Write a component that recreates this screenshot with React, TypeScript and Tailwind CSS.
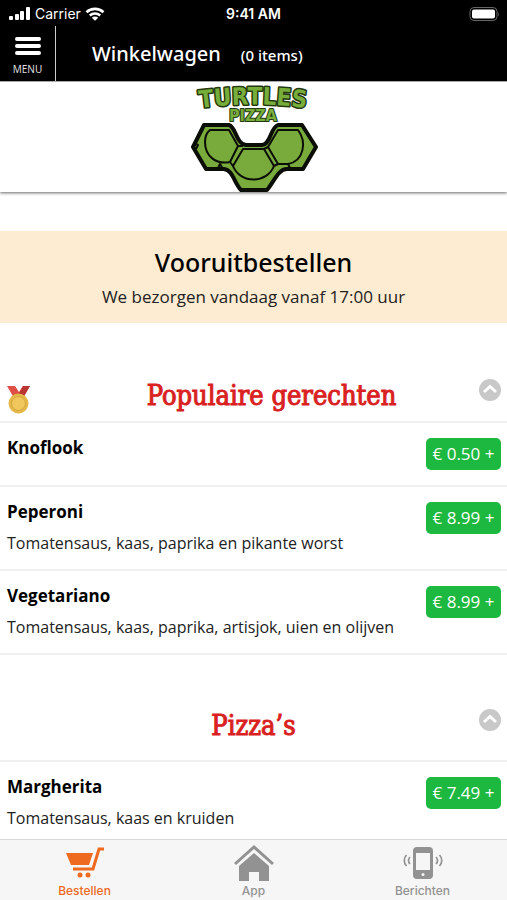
import type { ReactNode } from "react";
import clsx from "clsx";

type Dish = { name: string; description?: string; price: string };

const popular: Dish[] = [
  { name: "Knoflook", price: "0.50" },
  {
    name: "Peperoni",
    description: "Tomatensaus, kaas, paprika en pikante worst",
    price: "8.99",
  },
  {
    name: "Vegetariano",
    description: "Tomatensaus, kaas, paprika, artisjok, uien en olijven",
    price: "8.99",
  },
];

const pizzas: Dish[] = [
  {
    name: "Margherita",
    description: "Tomatensaus, kaas en kruiden",
    price: "7.49",
  },
];

function StatusBar() {
  return (
    <div className="grid h-[26px] grid-cols-3 items-center bg-black px-2 pt-px font-['Inter','Liberation_Sans',sans-serif] text-sm text-white">
      <div className="flex items-center gap-1">
        <svg width="23" height="14" viewBox="0 0 23 14" fill="#fff">
          <rect x="1" y="9" width="4" height="4" rx="1" />
          <rect x="7" y="7" width="4" height="6" rx="1" />
          <rect x="12" y="4" width="4" height="9" rx="1" />
          <rect x="18" y="0" width="4" height="13" rx="1" />
        </svg>
        <span>Carrier</span>
        <svg width="20" height="14" viewBox="0 0 20 14" fill="none" stroke="#fff" strokeWidth="2.6">
          <path d="M1.5 5.2C6.2.7 13.8.7 18.5 5.2" />
          <path d="M4.8 8.5c3-2.7 7.4-2.7 10.4 0" />
          <path d="M10 13.8 6.8 10.7c1.8-1.6 4.6-1.6 6.4 0z" fill="#fff" stroke="none" />
        </svg>
      </div>
      <span className="text-center font-semibold">9:41 AM</span>
      <svg className="ml-auto" width="32" height="14" viewBox="0 0 32 14">
        <rect x="3" y="0.5" width="27" height="13" rx="4" fill="none" stroke="#666" />
        <rect x="5" y="2.5" width="23" height="9" rx="2" fill="#fff" />
        <path d="M31 5v4.500c1-.8 1-3.700 0-4.500z" fill="#666" />
      </svg>
    </div>
  );
}

function Logo() {
  return (
    <svg
      width="150"
      height="110"
      viewBox="0 0 150 110"
      role="img"
      aria-label="Turtles Pizza"
      className="font-['DejaVu_Sans_Condensed','DejaVu_Sans',sans-serif] font-bold"
    >
      <defs>
        <path id="arc" d="M15 27Q74 18 133 27" />
      </defs>
      <text
        fontSize="24"
        fill="#76ad3b"
        stroke="#24380f"
        strokeWidth="3"
        strokeLinejoin="round"
        paintOrder="stroke"
      >
        <textPath href="#arc" startOffset="50%" textAnchor="middle">
          TURTLES
        </textPath>
      </text>
      <text
        x="74"
        y="39"
        fontSize="16"
        textAnchor="middle"
        fill="#76ad3b"
        stroke="#24380f"
        strokeWidth="2"
        strokeLinejoin="round"
        paintOrder="stroke"
      >
        PIZZA
      </text>
      <g fill="#78aa3c" stroke="#0b0d07" strokeLinejoin="round">
        <path
          d="M25 43H50C57 45 57 62 67 63H83C92 62 91 46 99 43H123L137 65L124 87H108C99 87 95 100 88 108H62C55 101 54 88 45 87H27L14 65z"
          strokeWidth="4"
        />
        <g strokeWidth="2">
          <path d="M31 48H50L59 64L51 80C37 83 26 74 26 60Q26 52 31 48z" />
          <path d="M99 48H119C128 60 125 79 109 82H99L89 65z" />
          <path d="M64 67H85L95 84C88 102 61 102 54 84z" />
          <path d="M59 64H64M89 65L85 67M51 80L54 84M99 82L95 84M109 82L111 86" fill="none" />
          <path d="m15 61 4 2-2 4M39 86l2-4 3 5" fill="none" />
        </g>
      </g>
    </svg>
  );
}

function Medal() {
  return (
    <svg width="24" height="28" viewBox="0 0 24 28">
      <path d="M0 0h8l4 6 4-6h7l-7 12H7z" fill="#df4f45" />
      <path d="m16 0h7l-7 12h-4l-1-3z" fill="#b93632" />
      <circle cx="11.5" cy="17.5" r="10" fill="#e5b84a" />
      <circle cx="11.5" cy="17.5" r="7" fill="#efc75c" stroke="#d5a53b" />
    </svg>
  );
}

function SectionHeader({ title, icon }: { title: string; icon?: ReactNode }) {
  return (
    <div
      className={clsx(
        "grid grid-cols-[40px_1fr_40px] items-center border-b-2 border-[#f0f0f0] px-[6px]",
        icon ? "pt-[50px] pb-[2px]" : "pt-[48px] pb-[11px]"
      )}
    >
      <div className="pt-2 pl-px">{icon}</div>
      <h2
        className={clsx(
          "text-center font-['DejaVu_Serif_Condensed','DejaVu_Serif',serif] text-[27px] leading-[46px] text-[#d92121] [-webkit-text-stroke:1px_#d92121]",
          icon && "pl-9"
        )}
      >
        {title}
      </h2>
      <button aria-label={`${title} inklappen`} className="mb-3 ml-auto">
        <svg width="22" height="22" viewBox="0 0 22 22">
          <circle cx="11" cy="11" r="11" fill="#c8c8c8" />
          <path d="m5 13 6-5.5 6 5.5" fill="none" stroke="#fff" strokeWidth="3" />
        </svg>
      </button>
    </div>
  );
}

function DishRow({ name, description, price }: Dish) {
  return (
    <li className="flex min-h-16 items-start justify-between border-b-2 border-[#f0f0f0] pr-[6px] pl-[7px]">
      <div className="pt-[13px] pb-[14px] leading-6">
        <h3 className="text-[17px] font-bold text-black">{name}</h3>
        {description && (
          <p className="mt-[7px] text-base text-[#222]">{description}</p>
        )}
      </div>
      <button className="mt-[15px] h-8 w-[75px] shrink-0 rounded-[5px] bg-[#1db840] text-[17px] text-white">
        € {price} +
      </button>
    </li>
  );
}

function TabBar() {
  return (
    <nav className="grid h-[61px] shrink-0 grid-cols-3 border-t border-[#d8d8d8] bg-[#f6f6f6] font-['Inter','Liberation_Sans',sans-serif] text-xs font-medium text-[#929292]">
      <a href="#bestellen" className="flex flex-col items-center gap-[2px] pt-[5px] text-[#ed6a1f]">
        <svg width="40" height="36" viewBox="0 0 40 36" fill="currentColor">
          <path d="M1 8h27l-4 12H6z" />
          <path d="M8 24h20l6-20h5" fill="none" stroke="currentColor" strokeWidth="3" />
          <circle cx="15" cy="30" r="2.5" />
          <circle cx="23" cy="30" r="2.5" />
        </svg>
        <span>Bestellen</span>
      </a>
      <a href="#app" className="flex flex-col items-center gap-[2px] pt-[5px]">
        <svg width="40" height="36" viewBox="0 0 40 36" fill="currentColor">
          <path d="M1 19 20 2l19 17" fill="none" stroke="currentColor" strokeWidth="3" />
          <path d="m20 8 15 13v15H25V27H15v9H5V21z" />
        </svg>
        <span>App</span>
      </a>
      <a href="#berichten" className="flex flex-col items-center gap-[2px] pt-[5px]">
        <svg width="40" height="36" viewBox="0 0 40 36" fill="none" stroke="currentColor">
          <rect x="10" y="2" width="20" height="32" rx="4" fill="currentColor" stroke="none" />
          <rect x="13" y="8" width="14" height="17" fill="#f6f6f6" stroke="none" />
          <circle cx="20" cy="29.5" r="1.5" fill="#f6f6f6" stroke="none" />
          <path
            d="M7 12c-2 2-2 5 0 7M3.5 10c-3 3-3 8 0 11M33 12c2 2 2 5 0 7M36.5 10c3 3 3 8 0 11"
            strokeWidth="1.7"
          />
        </svg>
        <span>Berichten</span>
      </a>
    </nav>
  );
}

export default function App() {
  return (
    <div className="flex h-screen flex-col bg-white font-['Open_Sans','Noto_Sans',sans-serif] text-black">
      <StatusBar />
      <header className="flex h-[55px] shrink-0 bg-black font-['Noto_Sans','Open_Sans',sans-serif] text-white">
        <button className="flex w-14 flex-col items-center border-r border-[#ccc] pt-[10px] text-[10px] leading-4 text-[#ddd]">
          <svg width="26" height="20" viewBox="0 0 26 20" stroke="#fff" strokeWidth="4" strokeLinecap="round">
            <path d="M2 3h22M2 10h22M2 17h22" />
          </svg>
          <span className="mt-[5px]">MENU</span>
        </button>
        <div className="flex items-center gap-5 pl-9">
          <h1 className="text-xl font-medium">Winkelwagen</h1>
          <span className="pt-1 text-[15px] font-medium">(0 items)</span>
        </div>
      </header>
      <main className="min-h-0 flex-1 overflow-y-auto [scrollbar-width:none]">
        <div className="flex h-[111px] justify-center border-t border-[#aaa] shadow-[0_1px_3px_rgba(0,0,0,0.6)]">
          <Logo />
        </div>
        <div className="mt-[39px] bg-[#feecd2] pt-[13px] pb-[14px] text-center">
          <h2 className="font-['Noto_Sans','Open_Sans',sans-serif] text-[25px] leading-9 font-medium">
            Vooruitbestellen
          </h2>
          <p className="mt-[5px] text-[17px] leading-6 text-[#222]">
            We bezorgen vandaag vanaf 17:00 uur
          </p>
        </div>
        <section>
          <SectionHeader title="Populaire gerechten" icon={<Medal />} />
          <ul>
            {popular.map((dish) => (
              <DishRow key={dish.name} {...dish} />
            ))}
          </ul>
        </section>
        <section>
          <SectionHeader title="Pizza’s" />
          <ul>
            {pizzas.map((dish) => (
              <DishRow key={dish.name} {...dish} />
            ))}
          </ul>
        </section>
      </main>
      <TabBar />
    </div>
  );
}
